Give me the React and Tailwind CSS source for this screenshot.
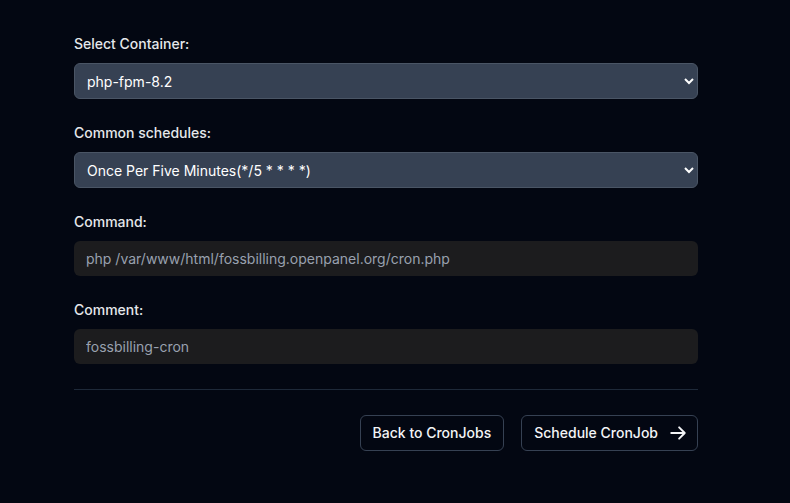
const Field = ({ label, children }) => (
  <div>
    <label className="block mb-[9px] text-sm font-medium leading-5 text-gray-200">{label}</label>
    {children}
  </div>
);

const App = () => {
  return (
    <div className="min-h-screen bg-[#030712] px-[74px] pt-[34px] font-['Inter',sans-serif] [color-scheme:dark]">
      <div className="w-[624px] flex flex-col gap-6">
        <Field label="Select Container:">
          <select
            defaultValue="php-fpm-8.2"
            className="w-full h-9 rounded-md border border-gray-600 bg-gray-700 pl-2 pr-3 text-sm text-white"
          >
            <option>php-fpm-8.2</option>
          </select>
        </Field>

        <Field label="Common schedules:">
          <select
            defaultValue="*/5 * * * *"
            className="w-full h-9 rounded-md border border-gray-600 bg-gray-700 pl-2 pr-3 text-sm text-white"
          >
            <option value="*/5 * * * *">Once Per Five Minutes(*/5 * * * *)</option>
          </select>
        </Field>

        <Field label="Command:">
          <input
            type="text"
            placeholder="php /var/www/html/fossbilling.openpanel.org/cron.php"
            className="w-full h-[35px] rounded-md bg-[#1c1c1e] px-3 text-sm text-white placeholder:text-gray-400 outline-none"
          />
        </Field>

        <Field label="Comment:">
          <input
            type="text"
            placeholder="fossbilling-cron"
            className="w-full h-[35px] rounded-md bg-[#1c1c1e] px-3 text-sm text-white placeholder:text-gray-400 outline-none"
          />
        </Field>

        <div className="mt-px border-t border-gray-800 pt-[25px] flex justify-end gap-4">
          <button className="h-9 rounded-md border border-gray-700 px-3 text-sm font-medium text-gray-100">
            Back to CronJobs
          </button>
          <button className="ml-px h-9 rounded-md border border-gray-700 pl-3 pr-[10px] text-sm font-medium text-gray-100 flex items-center gap-[11px]">
            Schedule CronJob
            <svg className="w-[18px] h-[18px]" viewBox="0 0 24 24" fill="none" stroke="currentColor" strokeWidth={2.6} strokeLinecap="round" strokeLinejoin="round">
              <path d="M13.5 4.5 21 12m0 0-7.5 7.5M21 12H3" />
            </svg>
          </button>
        </div>
      </div>
    </div>
  );
};

export default App;
